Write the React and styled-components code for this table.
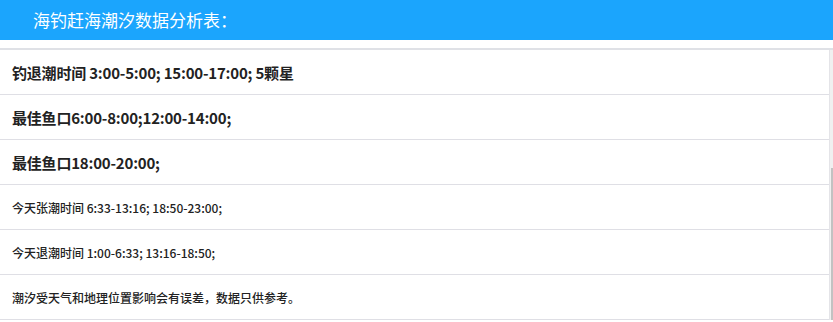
import styled, { createGlobalStyle } from "styled-components";

const GlobalStyle = createGlobalStyle`
  body {
    margin: 0;
    background: #ffffff;
    font-family: "Noto Sans CJK SC", "Noto Sans", sans-serif;
  }
`;

const rows = [
  { text: "钓退潮时间 3:00-5:00; 15:00-17:00; 5颗星", big: true },
  { text: "最佳鱼口6:00-8:00;12:00-14:00;", big: true },
  { text: "最佳鱼口18:00-20:00;", big: true },
  { text: "今天张潮时间 6:33-13:16; 18:50-23:00;" },
  { text: "今天退潮时间 1:00-6:33; 13:16-18:50;" },
  { text: "潮汐受天气和地理位置影响会有误差，数据只供参考。" },
];

const App = () => {
  return (
    <Page>
      <GlobalStyle />
      <Header>海钓赶海潮汐数据分析表：</Header>
      <Frame>
        <List>
          {rows.map((row) => (
            <Row key={row.text}>
              <RowText $big={row.big}>{row.text}</RowText>
            </Row>
          ))}
        </List>
        <Track>
          <Thumb />
        </Track>
      </Frame>
    </Page>
  );
};

export default App;

const Page = styled.div`
  width: 833px;
  height: 322px;
  overflow: hidden;
`;

const Header = styled.div`
  height: 40px;
  background: #1ba5fd;
  color: #ffffff;
  font-size: 17px;
  line-height: 40px;
  padding-left: 33px;
`;

const Frame = styled.div`
  display: flex;
  margin-top: 8px;
  border-top: 2px solid #dfe1e6;
`;

const List = styled.div`
  flex: 1;
  border-right: 1px solid #e4e4e8;
`;

const Row = styled.div`
  height: 44px;
  display: flex;
  align-items: center;
  padding-left: 12px;
  border-bottom: 1px solid #dfdfe5;
`;

const RowText = styled.span`
  color: #222222;
  font-weight: ${(p) => (p.$big ? 700 : 500)};
  font-size: ${(p) => (p.$big ? "15px" : "12px")};
  letter-spacing: ${(p) => (p.$big ? "-0.2px" : "0")};
`;

const Track = styled.div`
  width: 3px;
  display: flex;
  flex-direction: column;
  padding-top: 118px;
  background: #f0f0f0;
`;

const Thumb = styled.div`
  flex: 1;
  margin-left: 1px;
  background: #c2c2c2;
`;
